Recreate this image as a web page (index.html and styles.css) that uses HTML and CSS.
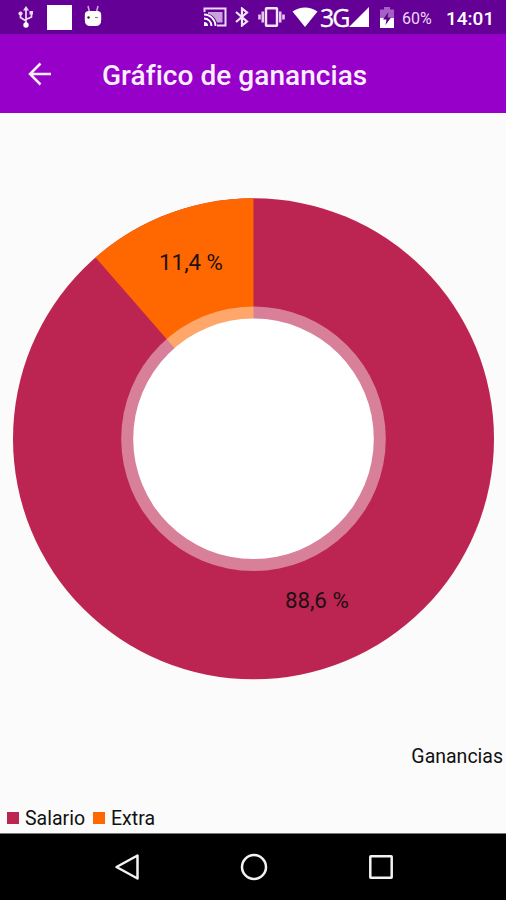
FILE: index.html
```html
<!DOCTYPE html>
<html lang="es">
<head>
    <meta charset="UTF-8">
    <meta name="viewport" content="width=device-width, initial-scale=1.0">
    <title>Gráfico de ganancias</title>
    <link rel="stylesheet" href="styles.css">
</head>
<body>

<div class="status-bar">
    <div class="status-left">
        <!-- USB -->
        <svg width="16" height="22" viewBox="0 0 16 22">
            <path d="M8 3v15M2.500 8v3.500L8 15M13.500 7v4L8 13.500" fill="none" stroke="#ecd9f5" stroke-width="1.700"/>
            <path d="M8 0l3 4.500H5z" fill="#ecd9f5"/>
            <circle cx="8" cy="19" r="2.700" fill="#fff"/>
            <circle cx="2.500" cy="7.500" r="2.100" fill="#ecd9f5"/>
            <path d="M11.500 5H15v3.500h-3.500z" fill="#ecd9f5"/>
        </svg>
        <span class="status-square"></span>
        <!-- Android -->
        <svg class="droid" width="18" height="22" viewBox="0 0 18 22">
            <path d="M4 1l1.500 6M14 1l-1.500 6" stroke="#d9a6e8" stroke-width="1.500"/>
            <path d="M.8 10q0-4 4-4h8.400q4 0 4 4v5q0 6-5.500 6H6.300Q.8 21 .8 15z" fill="#fff"/>
            <circle cx="4.500" cy="12.500" r="1.200" fill="#32104a"/>
            <path d="M11 12.500h3" stroke="#8d7898" stroke-width="1.200"/>
        </svg>
    </div>
    <div class="status-right">
        <!-- Cast -->
        <svg width="24" height="20" viewBox="0 0 24 20">
            <path d="M1.500 5V1.500h21v17H14" fill="none" stroke="#ecd9f5" stroke-width="2"/>
            <path d="M5 5h14.500v10.500H14C12 10 9 7.500 5 7z" fill="#c9a3dc"/>
            <path d="M1 7.500A11.500 11.500 0 0 1 12.500 19M1 11.500A7.500 7.500 0 0 1 8.500 19" fill="none" stroke="#fff" stroke-width="1.800"/>
            <path d="M1 15a4 4 0 0 1 4 4H1z" fill="#fff"/>
        </svg>
        <!-- Bluetooth -->
        <svg class="bluetooth" width="14" height="20" viewBox="0 0 14 20">
            <path d="M1 5l11 9.500L7 18.500v-17l5 4L1 15" fill="none" stroke="#f3e6fa" stroke-width="2.200"/>
        </svg>
        <!-- Vibrate -->
        <svg class="vibrate" width="27" height="20" viewBox="0 0 27 20">
            <rect x="8" y="1.200" width="11" height="17.600" rx=".5" fill="none" stroke="#f3e6fa" stroke-width="2.400"/>
            <path d="M4.800 4.500v11M22.200 4.500v11M1.500 7.500v5M25.500 7.500v5" stroke="#e4c9f1" stroke-width="2.600"/>
        </svg>
        <!-- Wifi -->
        <svg class="wifi" width="26" height="20" viewBox="0 0 26 20">
            <path d="M.5 4.500Q13-3.500 25.500 4.500L13 20z" fill="#fff"/>
        </svg>
        <span class="network">3G</span>
        <svg class="signal" width="20" height="20" viewBox="0 0 20 20">
            <path d="M20 0v20H0z" fill="#fff"/>
        </svg>
        <!-- Battery -->
        <svg class="battery" width="14" height="21" viewBox="0 0 14 21">
            <path d="M4 0h6v2.500h4V12H0V2.500h4z" fill="#a55fc6"/>
            <path d="M0 11h14v10H0z" fill="#fff"/>
            <path d="M8.500 5L3 12.500h3.500L5.500 18 11 10.500H7.500z" fill="#570085"/>
        </svg>
        <span class="percent">60%</span>
        <span class="clock">14:01</span>
    </div>
</div>

<header class="toolbar">
    <svg class="back" width="24" height="24" viewBox="0 0 24 24">
        <path d="M23 12H2M12.500 1.500L2 12l10.500 10.500" fill="none" stroke="#fbeeff" stroke-width="2.500"/>
    </svg>
    <h1>Gráfico de ganancias</h1>
</header>

<main class="chart">
    <svg class="pie" width="506" height="600" viewBox="0 0 506 600">
        <circle cx="253.500" cy="325.800" r="240.500" fill="#bc2451"/>
        <path d="M253.500 325.800V85.300A240.500 240.500 0 0 0 95.600 144.400z" fill="#ff6800"/>
        <circle cx="253.500" cy="325.800" r="132.300" fill="#fff" fill-opacity=".42"/>
        <circle cx="253.500" cy="325.800" r="120.300" fill="#fff"/>
        <text class="value" x="191" y="156.500">11,4 %</text>
        <text class="value" x="316.800" y="495">88,6 %</text>
    </svg>
    <div class="description">Ganancias</div>
    <div class="legend">
        <span class="mark salario"></span>
        <span class="label">Salario</span>
        <span class="mark extra"></span>
        <span class="label">Extra</span>
    </div>
</main>

<nav class="nav-bar">
    <svg width="28" height="28" viewBox="0 0 28 28">
        <path d="M24.500 2.500v23L3.500 14z"/>
    </svg>
    <svg width="28" height="28" viewBox="0 0 28 28">
        <circle cx="14" cy="14" r="12"/>
    </svg>
    <svg width="28" height="28" viewBox="0 0 28 28">
        <rect x="3.300" y="3.300" width="21.400" height="21.400" rx=".5"/>
    </svg>
</nav>

</body>
</html>
```

FILE: styles.css
```css
body {
    font-family: Roboto, "Liberation Sans", sans-serif;
    margin: 0;
    width: 506px;
    height: 900px;
    display: flex;
    flex-direction: column;
    background-color: #fbfbfb;
    overflow: hidden;
}
svg {
    display: block;
    flex-shrink: 0;
}
.status-bar {
    height: 34px;
    box-sizing: border-box;
    padding: 0 11px 0 18px;
    background-color: #640096;
    color: #fff;
    display: flex;
    justify-content: space-between;
}
.status-left,
.status-right {
    display: flex;
    align-items: center;
}
.status-square {
    width: 25px;
    height: 25px;
    margin: 0 12px 0 13px;
    background-color: #fff;
}
.droid {
    margin-top: -2px;
}
.bluetooth {
    margin-left: 8px;
}
.vibrate {
    margin-left: 9px;
}
.wifi {
    margin-left: 7px;
}
.network {
    width: 27px;
    margin-left: 2px;
    font-family: "Open Sans", sans-serif;
    font-size: 25px;
    letter-spacing: -2px;
    line-height: 34px;
    -webkit-text-stroke: 0.3px #fff;
}
.signal {
    margin-left: 2px;
}
.battery {
    margin-left: 11px;
}
.percent {
    width: 32px;
    margin-left: 8px;
    padding-top: 2px;
    font-size: 16px;
    color: #ecd9f5;
}
.clock {
    width: 49px;
    margin-left: 12px;
    padding-top: 2px;
    font-size: 19px;
    font-weight: 500;
}
.toolbar {
    height: 79px;
    box-sizing: border-box;
    padding-left: 28px;
    background-color: #9600c8;
    display: flex;
    align-items: center;
}
.toolbar h1 {
    margin: 3px 0 0 50px;
    font-size: 28px;
    font-weight: 500;
    letter-spacing: 0.05px;
    color: #fbeeff;
    white-space: nowrap;
}
.chart {
    flex: 1;
    display: flex;
    flex-direction: column;
    color: #111;
}
.value {
    font-size: 22.3px;
    fill: #1c1013;
    text-anchor: middle;
}
.description {
    margin-top: 32px;
    padding-right: 3px;
    font-size: 19.5px;
    line-height: 24px;
    text-align: right;
}
.legend {
    margin-top: 38px;
    padding-left: 7px;
    display: flex;
    align-items: center;
    font-size: 19.5px;
    line-height: 24px;
}
.mark {
    width: 12px;
    height: 12px;
    margin: -3px 6px 0 0;
}
.label {
    margin-right: 8px;
}
.salario {
    background-color: #bc2451;
}
.extra {
    background-color: #ff6800;
}
.nav-bar {
    height: 67px;
    box-sizing: border-box;
    padding: 0 111px 0 113px;
    border-top: 1px solid #777;
    background-color: #000;
    display: flex;
    align-items: center;
    justify-content: space-between;
}
.nav-bar svg {
    fill: none;
    stroke: #f2f2f2;
    stroke-width: 2.500;
    stroke-linejoin: round;
}
```
